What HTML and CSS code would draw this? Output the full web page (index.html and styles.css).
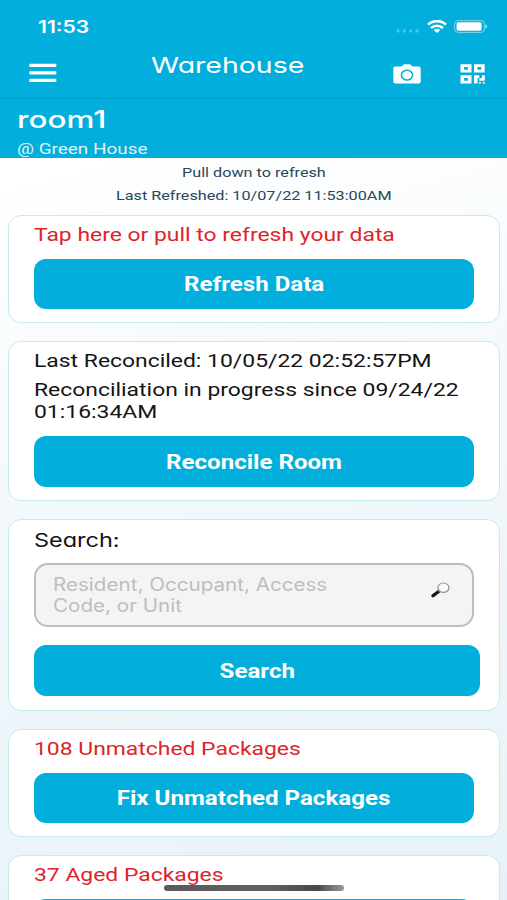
FILE: index.html
```html
<!DOCTYPE html>
<html lang="en">
<head>
<meta charset="utf-8">
<title>Warehouse</title>
<link rel="stylesheet" href="styles.css">
</head>
<body>
<div class="app">
  <header class="top">
    <div class="status">
      <span class="time"><span class="wide">11:53</span></span>
      <div class="indicators">
        <svg class="signal" width="24" height="4" viewBox="0 0 24 4"><circle cx="2" cy="2" r="1.7"/><circle cx="8.3" cy="2" r="1.7"/><circle cx="14.6" cy="2" r="1.7"/><circle cx="21" cy="2" r="1.7"/></svg>
        <svg class="wifi" width="20" height="13" viewBox="0 0 20 13" fill="none" stroke="#fff" stroke-width="2.6"><path d="M1 4.600C6-.1 14-.1 19 4.600"/><path d="M4 8c3.500-3 8.500-3 12 0"/><path d="M6.700 9.900c1.900-1.600 4.700-1.600 6.600 0L10 12.900z" fill="#fff" stroke="none"/></svg>
        <svg class="battery" width="34" height="13" viewBox="0 0 34 13"><rect x=".6" y=".6" width="29.8" height="11.8" rx="3.6" fill="none" stroke="#fff" stroke-opacity=".5"/><rect x="2.600" y="2.300" width="25" height="8.400" rx="1.600" fill="#fff"/><path d="M31.400 4.200Q33.300 5 33.300 6.500T31.400 8.800z" fill="#fff" opacity=".55"/></svg>
      </div>
    </div>
    <nav class="nav">
      <svg class="menu" width="28" height="20" viewBox="0 0 28 20" fill="#fff"><rect x=".3" y=".8" width="27" height="3.300" rx=".6"/><rect x=".3" y="8.300" width="27" height="3.300" rx=".6"/><rect x=".3" y="15.800" width="27" height="3.300" rx=".6"/></svg>
      <h1 class="title"><span class="wide">Warehouse</span></h1>
      <svg class="camera" width="28" height="20" viewBox="0 0 28 20"><path fill="#fff" d="M2.400 2.500h6L10.200.9Q10.700.3 11.500.3h5q.8 0 1.300.6l1.800 1.600h6q2.100 0 2.100 2v13q0 2-2.100 2H2.400q-2.100 0-2.100-2v-13q0-2 2.100-2z"/><ellipse cx="14" cy="11.100" rx="5.600" ry="4.900" fill="#fff" stroke="#02aedb" stroke-width="1.500"/></svg>
      <svg class="qr" width="26" height="20" viewBox="0 0 26 20" fill="#fff"><path fill-rule="evenodd" d="M.5.200h11v8.300H.5zM4.100 3v2.700h3.800V3zM14 .200h10.700v8.300H14zM17.500 3v2.700h3.800V3zM.5 11.200h11v8.400H.5zM4.100 14v2.800h3.800V14z"/><path d="M14 11.200h5.300v2.700h2.700v-2.700h2.800v5.500h-5.500v-2.700h-1.800v5.600H14zM18.900 17.900h2v1.700h-2zM22.700 17.900h2.100v1.700h-2.100z"/></svg>
    </nav>
    <div class="room">
      <h2 class="room-name"><span class="wide">room1</span></h2>
      <p class="room-site"><span class="wide">@ Green House</span></p>
    </div>
  </header>
  <main class="content">
    <div class="notice">
      <p><span class="wide">Pull down to refresh</span></p>
      <p><span class="wide">Last Refreshed: 10/07/22 11:53:00AM</span></p>
    </div>
    <section class="card">
      <p class="line alert"><span class="wide">Tap here or pull to refresh your data</span></p>
      <button class="btn"><span class="wide">Refresh Data</span></button>
    </section>
    <section class="card reconcile">
      <p class="line"><span class="wide">Last Reconciled: 10/05/22 02:52:57PM</span></p>
      <p class="line progress"><span class="wide">Reconciliation in progress since 09/24/22<br>01:16:34AM</span></p>
      <button class="btn"><span class="wide">Reconcile Room</span></button>
    </section>
    <section class="card search">
      <p class="line label"><span class="wide">Search:</span></p>
      <div class="field">
        <span class="placeholder"><span class="wide">Resident, Occupant, Access<br>Code, or Unit</span></span>
        <svg class="glass" width="19" height="16" viewBox="0 0 19 16"><path d="M2 13.700L7.300 9.700" stroke="#151515" stroke-width="3.300" stroke-linecap="round"/><path d="M6.500 9.500l2.500-1.800" stroke="#555" stroke-width="2"/><ellipse cx="12.400" cy="5.700" rx="5.500" ry="4.700" fill="#fafafa" stroke="#929292" stroke-width="1.200"/></svg>
      </div>
      <button class="btn btn-search"><span class="wide">Search</span></button>
    </section>
    <section class="card">
      <p class="line alert"><span class="wide">108 Unmatched Packages</span></p>
      <button class="btn"><span class="wide">Fix Unmatched Packages</span></button>
    </section>
    <section class="card">
      <p class="line alert"><span class="wide">37 Aged Packages</span></p>
      <button class="btn"></button>
    </section>
  </main>
  <div class="home-bar"></div>
</div>
</body>
</html>
```
FILE: styles.css
```css
* { box-sizing: border-box; }
body { margin: 0; font-family: Roboto, "Liberation Sans", sans-serif; }
h1, h2, p { margin: 0; font-weight: 400; }
svg { display: block; flex: none; }

.app {
  position: relative;
  width: 507px;
  height: 900px;
  overflow: hidden;
  background: linear-gradient(165deg, #fff 18%, #f3f8fc 50%, #e6f2f7 100%);
}

/* Extended letterforms */
.wide {
  display: inline-block;
  white-space: nowrap;
  transform: scaleX(var(--stretch, 1.205));
  transform-origin: left center;
}

.top { height: 158px; background: #02aedb; color: #fff; }
.status {
  display: flex;
  justify-content: space-between;
  height: 50px;
  padding: 16px 19px 0 38px;
}
.time {
  --stretch: 1.24;
  font: 600 17px/22px Inter, sans-serif;
}
.indicators { display: flex; align-items: flex-start; padding-top: 4px; }
.signal { margin: 9px 7px 0 0; fill: #fff; opacity: .3; }
.wifi { margin-right: 7px; }
.nav {
  display: flex;
  height: 49px;
  border-bottom: 2px solid #02a3d0;
  padding-left: 29px;
}
.menu { margin-top: 13px; }
.title {
  --stretch: 1.295;
  width: 242px;
  margin-left: 94px;
  font: 400 22px/30px Inter, sans-serif;
  font-feature-settings: "cv11";
}
.camera { margin-top: 14px; }
.qr { margin: 14px 0 0 39px; }
.room { height: 59px; padding: 4px 17px 0; }
.room-name {
  --stretch: 1.31;
  font: 500 24px/34px Inter, sans-serif;
}
.room-site {
  --stretch: 1.22;
  padding-top: 1px;
  font-size: 15.5px;
  line-height: 22px;
  opacity: .88;
}

.content { padding: 0 7px 0 8px; }
.notice {
  --stretch: 1.2;
  height: 57px;
  padding-top: 3px;
  font-size: 13.5px;
  line-height: 23px;
  text-align: center;
  color: #29465a;
}
.notice .wide { transform-origin: center; }

.card {
  height: 108px;
  margin-bottom: 18px;
  padding: 7px 25px 0;
  border: 1px solid #c5ebf2;
  border-radius: 13px;
  background: #fff;
}
.line {
  height: 22px;
  padding-top: 1px;
  font-size: 19px;
  line-height: 22px;
  color: #141414;
}
.alert { color: #dc242d; }
.btn {
  display: flex;
  justify-content: center;
  align-items: center;
  width: 440px;
  height: 50px;
  margin-top: 14px;
  padding: 0;
  border: 0;
  border-radius: 12px;
  background: #02aedb;
  color: #fff;
  font: 700 20px/22px Roboto, sans-serif;
}
.btn .wide { transform-origin: center; }
.reconcile { height: 160px; }
.reconcile .btn { height: 51px; }
.progress { height: 44px; margin-top: 7px; }

.search { height: 192px; }
.label {
  --stretch: 1.235;
  padding-top: 3px;
  font-family: Inter, sans-serif;
  font-feature-settings: "cv11";
}
.field {
  display: flex;
  justify-content: space-between;
  width: 440px;
  height: 64px;
  margin-top: 14px;
  padding: 9px 22px 0 17px;
  border: 2px solid #bdbdbd;
  border-radius: 14px;
  background: #f4f4f4;
}
.placeholder {
  --stretch: 1.145;
  font: 400 18px/21px Inter, sans-serif;
  color: #bebebe;
}
.glass { margin-top: 8px; }
.btn-search { width: 446px; height: 51px; margin-top: 18px; }

.home-bar {
  position: absolute;
  left: 164px;
  top: 885px;
  width: 180px;
  height: 6px;
  border-radius: 3px;
  background: linear-gradient(90deg, #5a5a5a, #606060 60%, #484848 85%, #999);
}
```
